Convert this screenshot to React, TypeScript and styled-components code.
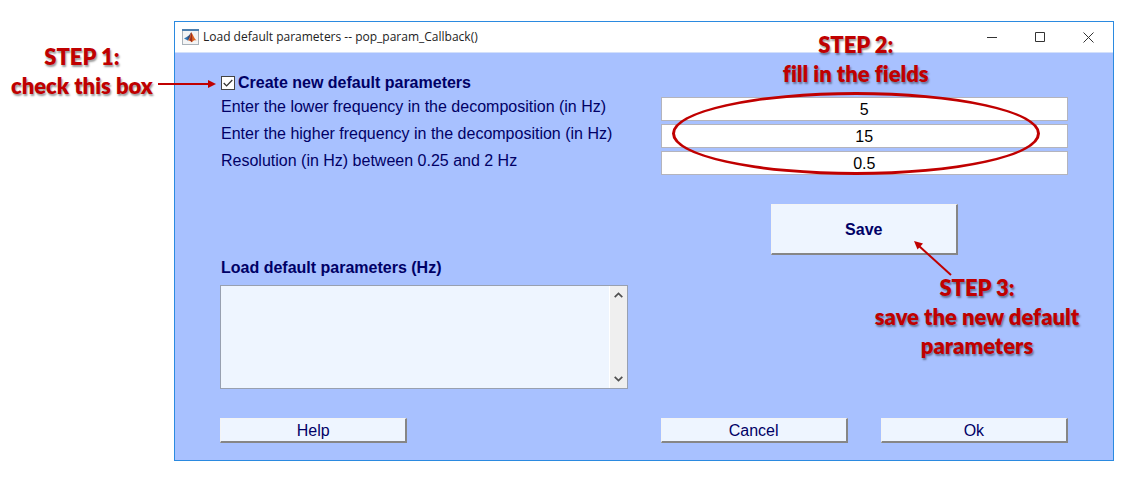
import React, { useState } from "react";
import styled, { createGlobalStyle } from "styled-components";

const red = "#c00000";
const navy = "#000066";
const pale = "#eef5ff";

const GlobalStyle = createGlobalStyle`
  * { box-sizing: border-box; }
  body { margin: 0; background: #fff; }
  button, input, select { font: inherit; color: inherit; margin: 0; }
`;

const Page = styled.main`
  display: flex;
  align-items: flex-start;
  padding: 21px 16px 17px 0;
  font: 16px/20px "Liberation Sans", Arial, sans-serif;
  color: ${navy};
`;

const Aside = styled.aside`
  position: relative;
  z-index: 1;
  flex: 0 0 174px;
  min-width: 0;
  display: flex;
  align-items: flex-end;
  gap: 5px;
  padding: 21px 0 0 11px;
`;

const Callout = styled.p`
  flex: none;
  margin: 0;
  font: 800 22px/29px Lato, Calibri, sans-serif;
  font-variant-ligatures: none;
  text-align: center;
  white-space: nowrap;
  color: ${red};
  text-shadow: 1px 2px 2px rgba(0, 0, 0, 0.4);
`;

const Arrow = styled.svg`
  display: block;
  flex: none;
  overflow: visible;
  pointer-events: none;
`;

const Window = styled.section`
  flex: 1;
  min-width: 0;
  border: 1px solid #2b8ae0;
  background: #a8c1ff;
`;

const TitleBar = styled.header`
  display: flex;
  align-items: center;
  height: 31px;
  padding: 0 1px 0 7px;
  background: #fff;
  border-bottom: 1px solid #d3e0fb;
`;

const Title = styled.h1`
  flex: 1;
  margin: 0 0 0 4px;
  font: 12px/16px "Open Sans", "Segoe UI", sans-serif;
  color: #222;
`;

const Caption = styled.button`
  display: grid;
  place-items: center;
  width: 48px;
  height: 30px;
  padding: 0;
  border: 0;
  background: none;
`;

const Form = styled.form`
  padding: 16px 45px 17px;
`;

const CheckRow = styled.label`
  display: flex;
  align-items: center;
  gap: 3px;
  height: 28px;
  padding-left: 1px;
  font-weight: bold;
`;

const CheckBox = styled.span`
  position: relative;
  display: grid;
  width: 14px;
  height: 14px;
`;

const Check = styled.input`
  appearance: none;
  width: 14px;
  height: 14px;
  border: 1px solid #444;
  background: #fff;
`;

const Tick = styled.svg`
  position: absolute;
  inset: 0;
  pointer-events: none;
`;

const Columns = styled.div`
  display: grid;
  grid-template-columns: minmax(0, 1fr) minmax(0, 1fr);
  column-gap: 33px;
`;

const Stack = styled.div`
  position: relative;
  display: grid;
  grid-auto-rows: 24px;
  row-gap: 3px;
`;

const FieldLabel = styled.label`
  padding-left: 1px;
  white-space: nowrap;
`;

const Field = styled.input`
  width: 100%;
  height: 24px;
  padding: 2px 0 0;
  border: 1px solid #b4b4bc;
  background: #fff;
  color: #000;
  text-align: center;
`;

const Highlight = styled.div`
  position: absolute;
  inset: -5px 28px 0 11px;
  border: 3px solid ${red};
  border-radius: 50%;
  pointer-events: none;
`;

const HighlightNote = styled.div`
  position: absolute;
  bottom: 100%;
  left: 11px;
  right: 28px;
  padding-bottom: 9px;
  pointer-events: none;
`;

const Button = styled.button<{ $tall?: boolean }>`
  width: 100%;
  height: ${(p) => (p.$tall ? 51 : 25)}px;
  padding: 2px 0 0;
  border-style: solid;
  border-width: 1px 2px 2px 1px;
  border-color: #f4f4f4 #868686 #868686 #f4f4f4;
  background: ${pale};
  font-weight: ${(p) => (p.$tall ? "bold" : "normal")};
`;

const SaveRow = styled.div`
  display: grid;
  grid-template-columns: repeat(4, 1fr);
  column-gap: 33px;
  margin-top: 29px;
`;

const SaveSlot = styled.div`
  position: relative;
  grid-column: 3 / 5;
  justify-self: center;
  width: 187px;
`;

const SaveArrow = styled.div`
  position: absolute;
  left: 143px;
  top: 37px;
`;

const SaveNote = styled.div`
  position: absolute;
  left: 104px;
  top: 69px;
  pointer-events: none;
`;

const ListLabel = styled.label`
  display: block;
  margin: 3px 0 7px;
  padding-left: 1px;
  font-weight: bold;
`;

const ListFrame = styled.div`
  display: flex;
  height: 104px;
  border: 1px solid #98a0b0;
  background: ${pale};
`;

const List = styled.select`
  flex: 1;
  appearance: none;
  overflow: hidden;
  height: 100%;
  border: 0;
  border-radius: 0;
  background: none;
`;

const ScrollTrack = styled.div`
  display: flex;
  flex-direction: column;
  justify-content: space-between;
  width: 18px;
  border-left: 1px solid #fff;
  background: #efefef;
`;

const ScrollButton = styled.button`
  display: grid;
  place-items: center;
  height: 18px;
  padding: 0;
  border: 0;
  background: none;
`;

const Footer = styled.footer`
  display: grid;
  grid-template-columns: repeat(4, 1fr);
  column-gap: 33px;
  margin-top: 29px;
`;

const FooterSlot = styled.div<{ $column: number }>`
  grid-column: ${(p) => p.$column};
`;

const FigureIcon = () => (
  <svg width="17" height="16" viewBox="0 0 17 16" aria-hidden="true">
    <rect x="0.5" y="0.5" width="16" height="15" fill="#f3f4f5" stroke="#a9b2ba" />
    <rect width="17" height="2" fill="#4d7fae" />
    <path d="M2 9.5 5.5 7.5 7.5 9 5.8 11.5Z" fill="#2f78b8" />
    <path d="M5.5 7.5C7 7 8 4.5 9.2 3.2L8.5 8 5.8 11.5Z" fill="#3b4d78" />
    <path d="M9.2 3.2C10.6 4.5 12 9 14.5 11.5 12.8 10.8 11.5 11 10 13.2 9 12.8 8 11 5.8 11.5 8 9.5 8.3 5 9.2 3.2Z" fill="#dc6222" />
    <path d="M9.2 3.2C10.2 5 10.4 10 10 13.2 9.2 12.8 8.7 11.6 7.5 11.3 9 9 9.1 5 9.2 3.2Z" fill="#982d20" />
  </svg>
);

const fields = [
  { id: "low", label: "Enter the lower frequency in the decomposition (in Hz)", value: "5" },
  { id: "high", label: "Enter the higher frequency in the decomposition (in Hz)", value: "15" },
  { id: "resolution", label: "Resolution (in Hz) between 0.25 and 2 Hz", value: "0.5" },
];

export default function App() {
  const [checked, setChecked] = useState(true);

  return (
    <>
      <GlobalStyle />
      <Page>
        <Aside>
          <Callout>
            STEP 1:
            <br />
            check this box
          </Callout>
          <Arrow width="58" height="32" viewBox="0 0 58 32" aria-hidden="true">
            <path d="M0 16H51" stroke={red} strokeWidth="2" />
            <path d="M58 16 50 12V20Z" fill={red} />
          </Arrow>
        </Aside>
        <Window>
          <TitleBar>
            <FigureIcon />
            <Title>Load default parameters -- pop_param_Callback()</Title>
            <Caption type="button" aria-label="Minimize">
              <svg width="11" height="11" viewBox="0 0 11 11">
                <path d="M0 5.5H10" stroke="#333" />
              </svg>
            </Caption>
            <Caption type="button" aria-label="Maximize">
              <svg width="11" height="11" viewBox="0 0 11 11">
                <path d="M.5.5H9.5V9.5H.5Z" fill="none" stroke="#333" />
              </svg>
            </Caption>
            <Caption type="button" aria-label="Close">
              <svg width="11" height="11" viewBox="0 0 11 11">
                <path d="M.5.5 10.5 10.5M10.5.5.5 10.5" stroke="#333" />
              </svg>
            </Caption>
          </TitleBar>
          <Form onSubmit={(e) => e.preventDefault()}>
            <CheckRow>
              <CheckBox>
                <Check type="checkbox" checked={checked} onChange={(e) => setChecked(e.target.checked)} />
                {checked && (
                  <Tick width="14" height="14" viewBox="0 0 14 14" aria-hidden="true">
                    <path d="M2.7 7 5.6 9.9 11.3 4" fill="none" stroke="#333" strokeWidth="1.3" />
                  </Tick>
                )}
              </CheckBox>
              Create new default parameters
            </CheckRow>
            <Columns>
              <Stack>
                {fields.map((f) => (
                  <FieldLabel key={f.id} htmlFor={f.id}>
                    {f.label}
                  </FieldLabel>
                ))}
              </Stack>
              <Stack>
                {fields.map((f) => (
                  <Field key={f.id} id={f.id} type="text" defaultValue={f.value} />
                ))}
                <Highlight />
                <HighlightNote>
                  <Callout>
                    STEP 2:
                    <br />
                    fill in the fields
                  </Callout>
                </HighlightNote>
              </Stack>
            </Columns>
            <SaveRow>
              <SaveSlot>
                <Button $tall type="submit">
                  Save
                </Button>
                <SaveArrow>
                  <Arrow width="38" height="35" viewBox="0 0 38 35" aria-hidden="true">
                    <path d="M5 5 37 34" stroke={red} strokeWidth="2" />
                    <path d="M0 0 9 2.5 3.5 8.5Z" fill={red} />
                  </Arrow>
                </SaveArrow>
                <SaveNote>
                  <Callout>
                    STEP 3:
                    <br />
                    save the new default
                    <br />
                    parameters
                  </Callout>
                </SaveNote>
              </SaveSlot>
            </SaveRow>
            <ListLabel htmlFor="defaults">Load default parameters (Hz)</ListLabel>
            <Columns>
              <ListFrame>
                <List id="defaults" multiple />
                <ScrollTrack>
                  <ScrollButton type="button" aria-label="Scroll up">
                    <svg width="9" height="6" viewBox="0 0 9 6">
                      <path d="M.7 5.2 4.5 1.4 8.3 5.2" fill="none" stroke="#505050" strokeWidth="1.7" />
                    </svg>
                  </ScrollButton>
                  <ScrollButton type="button" aria-label="Scroll down">
                    <svg width="9" height="6" viewBox="0 0 9 6">
                      <path d="M.7.8 4.5 4.6 8.3.8" fill="none" stroke="#505050" strokeWidth="1.7" />
                    </svg>
                  </ScrollButton>
                </ScrollTrack>
              </ListFrame>
            </Columns>
            <Footer>
              <FooterSlot $column={1}>
                <Button type="button">Help</Button>
              </FooterSlot>
              <FooterSlot $column={3}>
                <Button type="button">Cancel</Button>
              </FooterSlot>
              <FooterSlot $column={4}>
                <Button type="button">Ok</Button>
              </FooterSlot>
            </Footer>
          </Form>
        </Window>
      </Page>
    </>
  );
}
